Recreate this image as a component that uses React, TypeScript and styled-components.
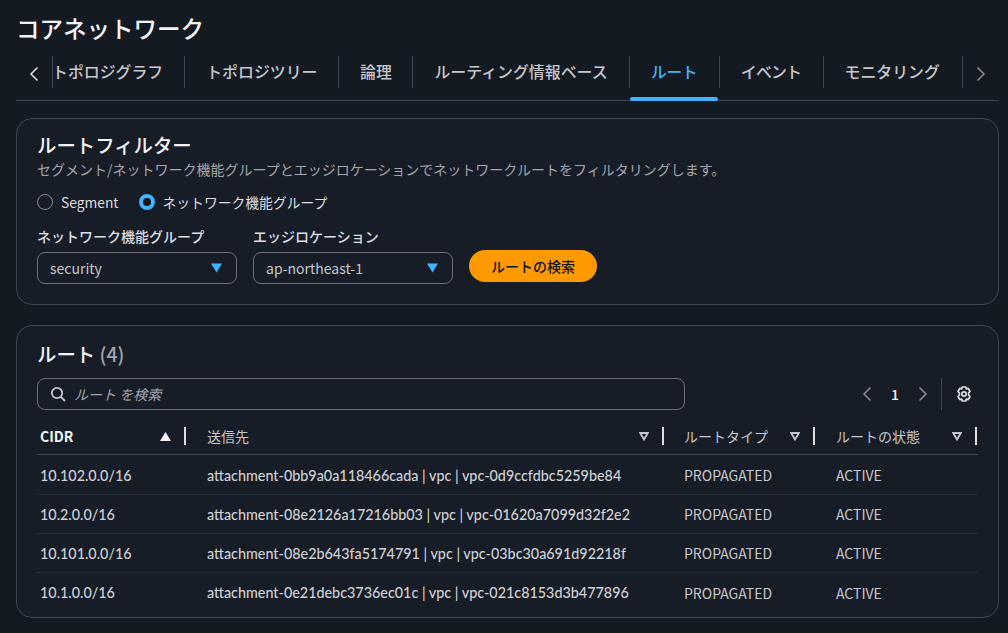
import React from "react";
import styled, { createGlobalStyle } from "styled-components";

const Global = createGlobalStyle`
  html, body { margin: 0; padding: 0; background: #131a22; }
  body { font-family: "Noto Sans CJK JP", "Noto Sans", sans-serif; color: #c6c6cd; font-size: 14px; }
  * { box-sizing: border-box; }
`;

const Page = styled.div`
  width: 1008px; height: 633px; overflow: hidden; padding: 0 9px 0 16px;
  display: flex; flex-direction: column; background: #131a22;
`;
const Title = styled.h1`
  margin: 0; height: 53px; padding-top: 11px;
  font-size: 23.5px; line-height: 34px; font-weight: 500; color: #f3f3f7;
`;
const TabBar = styled.div`
  height: 48px; display: flex; align-items: flex-start; border-bottom: 1px solid #414750; position: relative; flex: none;
`;
const ScrollBtn = styled.div<{ $dim?: boolean }>`
  width: 36px; height: 35px; margin-top: 3px; flex: none; display: flex; align-items: center; justify-content: center;
  color: ${p => (p.$dim ? "#8c8c94" : "#dedee3")};
`;
const TabClip = styled.div`
  width: 911px; overflow: hidden; flex: none; border-left: 1px solid #414750; border-right: 1px solid #414750;
  height: 32px; margin-top: 3px; position: relative;
`;
const ClipInner = styled.div`
  display: flex; margin-left: -22px; margin-top: -3px; height: 47px;
`;
const Tab = styled.div<{ $active?: boolean; $last?: boolean; $w?: number; $track?: number }>`
  flex: none; height: 38px; padding: 0 21px 2px; display: flex; align-items: center; justify-content: center; position: relative;
  font-size: 15.9px; font-weight: 500; white-space: nowrap;
  ${p => (p.$w ? `width: ${p.$w}px; padding-left: 0; padding-right: 0;` : "")}
  letter-spacing: ${p => p.$track ?? 0}px;
  color: ${p => (p.$active ? "#42b4ff" : "#c6c6cd")};
  border-right: ${p => (p.$last ? "none" : "1px solid #414750")};
`;
const Card = styled.section<{ $h: number }>`
  height: ${p => p.$h}px; flex: none; width: 983px; background: #161d26; border: 1px solid #414750; border-radius: 16px;
  padding: 0 20px;
`;
const FilterCard = styled(Card)` margin-top: 17px; padding-top: 12px; `;
const RouteCard = styled(Card)` margin-top: 20px; padding-top: 14px; `;
const H2 = styled.h2`
  margin: 0; font-size: 19.4px; line-height: 28px; font-weight: 500; color: #f3f3f7;
`;
const Count = styled.span` color: #a4a4ad; font-weight: 500; `;
const Sub = styled.p`
  margin: -1px 0 0; font-size: 14px; line-height: 22px; color: #a4a4ad; white-space: nowrap;
`;
const RadioRow = styled.div` display: flex; gap: 20px; margin-top: 11px; height: 22px; align-items: center; `;
const RadioLabel = styled.label`
  display: flex; align-items: center; gap: 8px; font-size: 13.8px; font-weight: 400; color: #dedee3;
`;
const RadioDot = styled.span<{ $on?: boolean }>`
  width: 16px; height: 16px; border-radius: 50%; flex: none;
  border: ${p => (p.$on ? "4.5px solid #42b4ff" : "1px solid #8c8c94")};
  background: ${p => (p.$on ? "#0f141a" : "transparent")};
`;
const Fields = styled.div` display: flex; gap: 16px; margin-top: 13px; align-items: flex-end; `;
const Field = styled.div` width: 200px; display: flex; flex-direction: column; gap: 6px; `;
const FieldLabel = styled.div` font-size: 14px; line-height: 20px; font-weight: 500; color: #dedee3; `;
const Select = styled.div`
  height: 32px; border: 1px solid #6e6e78; border-radius: 8px; background: #161d26;
  display: flex; align-items: center; justify-content: space-between; padding: 0 14px 0 12px;
  font-size: 14px; font-weight: 400; color: #c6c6cd;
`;
const PrimaryBtn = styled.button`
  height: 32px; width: 128px; margin-bottom: 2px; border: none; border-radius: 16px; background: #ff9900;
  font-family: inherit; font-size: 14px; font-weight: 500; color: #0f141a; padding: 0;
`;
const Tools = styled.div` display: flex; align-items: center; margin-top: 10px; height: 32px; `;
const Search = styled.div`
  width: 648px; height: 32px; border: 1px solid #6e6e78; border-radius: 8px; background: #161d26;
  display: flex; align-items: center; gap: 8px; padding-left: 12px;
  font-size: 14px; font-style: italic; color: #a4a4ad;
`;
const Pager = styled.div`
  display: flex; align-items: center; margin-left: auto; color: #8c8c94;
`;
const PageNo = styled.span`
  width: 40px; text-align: center; font-size: 14px; font-weight: 500; color: #f3f3f7;
`;
const PagerSep = styled.div` width: 1px; height: 32px; background: #414750; margin-left: 10px; `;
const Gear = styled.div`
  width: 30px; margin: 0 -1px 0 7px; height: 32px; display: flex; align-items: center; justify-content: center; color: #dedee3;
`;
const Table = styled.div` margin-top: 8px; width: 941px; `;
const Body = styled.div` padding-top: 1px; `;
const Row = styled.div<{ $head?: boolean; $last?: boolean }>`
  display: grid; grid-template-columns: 150px 478px 151px 162px;
  height: ${p => (p.$head ? 37 : 39)}px;
  border-bottom: ${p => (p.$last ? "none" : p.$head ? "1px solid #414750" : "1px solid #232b37")};
`;
const Cell = styled.div<{ $pad?: number }>`
  display: flex; align-items: center; white-space: nowrap; font-size: 14px; font-weight: 400; color: #c6c6cd;
  padding-left: ${p => p.$pad ?? 20}px;
`;
const ValueCell = styled(Cell)`
  font-family: Lato, "Noto Sans CJK JP", sans-serif; font-size: 14.35px; font-weight: 500; color: #d0d0d6;
`;
const HeadCell = styled(Cell)<{ $sorted?: boolean }>`
  justify-content: space-between;
  font-weight: ${p => (p.$sorted ? 700 : 400)};
  color: ${p => (p.$sorted ? "#f3f3f7" : "#c6c6cd")};
`;
const HeadEnd = styled.span` display: flex; align-items: center; gap: 13px; `;
const ColSep = styled.span` width: 2px; height: 18px; background: #dedee3; display: block; margin-right: 1px; `;
const ActiveBar = styled.div`
  position: absolute; left: 614px; bottom: -1px; width: 88px; height: 4px; border-radius: 2px; background: #42b4ff;
`;

const Chevron = ({ dir, width = 1.5 }: { dir: "l" | "r"; width?: number }) => (
  <svg width="16" height="16" viewBox="0 0 16 16" fill="none" stroke="currentColor" strokeWidth={width}>
    <path d={dir === "l" ? "M11.500 1.500 5 8l6.500 6.500" : "M4.500 1.500 11 8l-6.500 6.500"} />
  </svg>
);
const Caret = () => (
  <svg width="11" height="10" viewBox="0 0 11 10"><path d="M0 .5h11L5.500 9.500z" fill="#42b4ff" /></svg>
);
const FilterCaret = () => (
  <svg width="10" height="9" viewBox="0 0 10 9" fill="none" stroke="#c6c6cd" strokeWidth="1.8"><path d="M1.200 1h7.600L5 7.500z" /></svg>
);
const SortUp = () => (
  <svg width="11" height="9" viewBox="0 0 11 9"><path d="M5.500 0 11 9H0z" fill="#f3f3f7" /></svg>
);
const SearchIcon = () => (
  <svg width="16" height="16" viewBox="0 0 16 16" fill="none" stroke="#c6c6cd" strokeWidth="1.8">
    <circle cx="7" cy="7" r="5.200" /><path d="M10.800 10.800 15 15" />
  </svg>
);
const GearIcon = () => (
  <svg width="16" height="16" viewBox="0 0 16 16" fill="none" stroke="currentColor" strokeWidth="1.700" strokeLinejoin="round">
    <path d="M6.200 1h3.600l.5 2 1.900-.6 1.800 3.100L12.600 7v2l1.400 1.500-1.800 3.100-1.900-.6-.5 2H6.200l-.5-2-1.900.6L2 10.500 3.400 9V7L2 5.500l1.800-3.100 1.900.6z" />
    <circle cx="8" cy="8" r="2.200" />
  </svg>
);

const rows = [
  ["10.102.0.0/16", "attachment-0bb9a0a118466cada | vpc | vpc-0d9ccfdbc5259be84"],
  ["10.2.0.0/16", "attachment-08e2126a17216bb03 | vpc | vpc-01620a7099d32f2e2"],
  ["10.101.0.0/16", "attachment-08e2b643fa5174791 | vpc | vpc-03bc30a691d92218f"],
  ["10.1.0.0/16", "attachment-0e21debc3736ec01c | vpc | vpc-021c8153d3b477896"],
];

export default function App() {
  return (
    <Page>
      <Global />
      <Title>コアネットワーク</Title>
      <TabBar>
        <ScrollBtn><Chevron dir="l" /></ScrollBtn>
        <TabClip>
          <ClipInner>
            <Tab>トポロジグラフ</Tab>
            <Tab>トポロジツリー</Tab>
            <Tab $w={74}>論理</Tab>
            <Tab>ルーティング情報ベース</Tab>
            <Tab $active $w={90} $track={-0.5}>ルート</Tab>
            <Tab $w={104} $track={-0.8}>イベント</Tab>
            <Tab $last>モニタリング</Tab>
          </ClipInner>
        </TabClip>
        <ScrollBtn $dim><Chevron dir="r" /></ScrollBtn>
        <ActiveBar />
      </TabBar>
      <FilterCard $h={187}>
        <H2>ルートフィルター</H2>
        <Sub>セグメント/ネットワーク機能グループとエッジロケーションでネットワークルートをフィルタリングします。</Sub>
        <RadioRow>
          <RadioLabel><RadioDot />Segment</RadioLabel>
          <RadioLabel><RadioDot $on />ネットワーク機能グループ</RadioLabel>
        </RadioRow>
        <Fields>
          <Field>
            <FieldLabel>ネットワーク機能グループ</FieldLabel>
            <Select>security<Caret /></Select>
          </Field>
          <Field>
            <FieldLabel>エッジロケーション</FieldLabel>
            <Select>ap-northeast-1<Caret /></Select>
          </Field>
          <PrimaryBtn>ルートの検索</PrimaryBtn>
        </Fields>
      </FilterCard>
      <RouteCard $h={293}>
        <H2>ルート <Count>(4)</Count></H2>
        <Tools>
          <Search><SearchIcon />ルート を検索</Search>
          <Pager>
            <Chevron dir="l" />
            <PageNo>1</PageNo>
            <Chevron dir="r" />
            <PagerSep />
          </Pager>
          <Gear><GearIcon /></Gear>
        </Tools>
        <Table>
          <Row $head>
            <HeadCell $pad={3} $sorted>CIDR<HeadEnd><SortUp /><ColSep /></HeadEnd></HeadCell>
            <HeadCell>送信先<HeadEnd><FilterCaret /><ColSep /></HeadEnd></HeadCell>
            <HeadCell $pad={19}>ルートタイプ<HeadEnd><FilterCaret /><ColSep /></HeadEnd></HeadCell>
            <HeadCell>ルートの状態<HeadEnd><FilterCaret /><ColSep /></HeadEnd></HeadCell>
          </Row>
          <Body>
            {rows.map((r, i) => (
              <Row key={r[0]} $last={i === rows.length - 1}>
                <ValueCell $pad={3}>{r[0]}</ValueCell>
                <ValueCell>{r[1]}</ValueCell>
                <Cell $pad={19}>PROPAGATED</Cell>
                <Cell>ACTIVE</Cell>
              </Row>
            ))}
          </Body>
        </Table>
      </RouteCard>
    </Page>
  );
}
